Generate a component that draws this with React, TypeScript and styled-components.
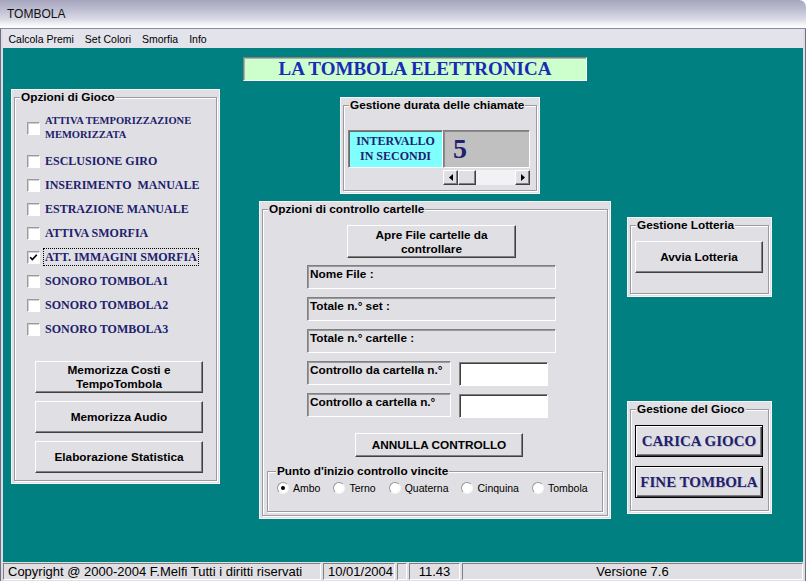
import React from 'react';
import styled, { createGlobalStyle, css } from 'styled-components';

const SANS = `"Liberation Sans", Arial, sans-serif`;
const SERIF = `"Liberation Serif", "Times New Roman", serif`;
const FACE = '#e0dfe3';
const NAVY = '#20206e';

const GlobalStyle = createGlobalStyle`
    html, body {
        margin: 0;
        padding: 0;
        background: #ffffff;
    }
    body {
        font-family: ${SANS};
    }
    * {
        box-sizing: border-box;
    }
`;

const raised = css`
    border: 1px solid;
    border-color: #ffffff #404040 #404040 #ffffff;
    box-shadow: inset -1px -1px 0 #808080;
`;

const sunken = css`
    border: 1px solid;
    border-color: #808080 #ffffff #ffffff #808080;
    box-shadow: inset 1px 1px 0 #9a9a9a;
`;

const Window = styled.div`
    width: 806px;
    height: 581px;
    display: flex;
    flex-direction: column;
    overflow: hidden;
`;

const TitleBar = styled.div`
    flex: none;
    height: 29px;
    display: flex;
    align-items: center;
    padding-left: 7px;
    background: linear-gradient(#a6a5be 0%, #bebed1 35%, #d9d9e6 68%, #f7f7fa 90%, #ffffff 100%);
    border-bottom: 1px solid #8a8a9a;
    border-top-right-radius: 7px;
    font: 12px ${SANS};
    color: #111;
`;

const Body = styled.div`
    flex: 1;
    display: flex;
    flex-direction: column;
    border-left: 1px solid #6e6e80;
    border-right: 1px solid #6e6e80;
    padding: 0 2px;
    background: #dcdce6;
`;

const MenuBar = styled.div`
    flex: none;
    height: 19px;
    display: flex;
    align-items: center;
    background: #e3e3eb;
    font: 10.5px ${SANS};
    color: #000;
`;

const MenuItem = styled.span`
    padding: 0 5.5px;
`;

const Main = styled.div`
    flex: none;
    height: 514px;
    background: #008080;
    display: flex;
    align-items: flex-start;
    padding: 9px 0 0 8px;
`;

const LeftCol = styled.div`
    margin-top: 32px;
    width: 209px;
`;

const CenterCol = styled.div`
    margin-left: 39px;
    width: 352px;
    display: flex;
    flex-direction: column;
`;

const RightCol = styled.div`
    margin-left: 16px;
    margin-top: 160px;
    display: flex;
    flex-direction: column;
`;

const Banner = styled.div`
    margin-left: -16px;
    width: 344px;
    height: 24px;
    background: #ccffcc;
    ${sunken};
    box-shadow: inset 1px 1px 0 #b0b0b0;
    display: flex;
    align-items: center;
    justify-content: center;
    font: bold 19px/22px ${SERIF};
    color: #1b2ab6;
`;

const Frame = styled.div<{ $w: number; $h: number; $top?: number; $left?: number }>`
    width: ${p => p.$w}px;
    height: ${p => p.$h}px;
    margin-top: ${p => p.$top ?? 0}px;
    margin-left: ${p => p.$left ?? 0}px;
    background: ${FACE};
    border: 1px solid #f6f6f9;
    padding: 0 2px 2px;
    display: flex;
    flex: none;
`;

const SubFrame = styled.div<{ $w: number; $h: number; $top: number; $left: number }>`
    flex: none;
    display: flex;
    width: ${p => p.$w}px;
    height: ${p => p.$h}px;
    margin: ${p => p.$top}px 0 0 ${p => p.$left}px;
`;

const Group = styled.fieldset`
    flex: 1;
    margin: 0;
    padding: 0;
    min-width: 0;
    border: 1px solid #9a9aa2;
    box-shadow: 1px 1px 0 #ffffff, inset 1px 1px 0 #ffffff;
    display: flex;
    flex-direction: column;
    align-items: flex-start;
`;

const Legend = styled.legend<{ $indent?: number }>`
    margin-left: ${p => p.$indent ?? 5}px;
    padding: 0 1px;
    background: ${FACE};
    font: bold 11.8px/14px ${SANS};
    color: #000;
`;

const CheckList = styled.div`
    padding: 9px 0 0 12px;
    display: flex;
    flex-direction: column;
`;

const CheckRow = styled.div<{ $tall?: boolean }>`
    display: flex;
    align-items: center;
    gap: 3px;
    height: ${p => (p.$tall ? 30 : 24)}px;
    margin-bottom: ${p => (p.$tall ? 6 : 0)}px;
`;

const Box = styled.span`
    flex: none;
    width: 13px;
    height: 13px;
    background: #ffffff;
    border: 1px solid;
    border-color: #9c9c9c #ffffff #ffffff #9c9c9c;
    box-shadow: inset 1px 1px 0 #d0d0d0;
    display: flex;
    align-items: center;
    justify-content: center;
`;

const CheckLabel = styled.span<{ $small?: boolean; $focus?: boolean }>`
    font: bold ${p => (p.$small ? 10.5 : 12)}px/14px ${SERIF};
    color: ${NAVY};
    padding: 1px 1px 1px 1px;
    border: 1px dotted ${p => (p.$focus ? '#000' : 'transparent')};
    white-space: nowrap;
`;

const ButtonStack = styled.div<{ $top: number; $left: number; $gap: number }>`
    display: flex;
    flex-direction: column;
    gap: ${p => p.$gap}px;
    margin-top: ${p => p.$top}px;
    margin-left: ${p => p.$left}px;
`;

const Button = styled.button<{ $w: number; $h: number; $top?: number; $left?: number }>`
    flex: none;
    width: ${p => p.$w}px;
    height: ${p => p.$h}px;
    margin: ${p => p.$top ?? 0}px 0 0 ${p => p.$left ?? 0}px;
    padding: 0;
    background: ${FACE};
    ${raised};
    font: bold 11.8px/14px ${SANS};
    color: #000;
    text-align: center;
    cursor: default;
`;

const BigButton = styled(Button)`
    border: 1px solid #000;
    box-shadow: inset 1px 1px 0 #ffffff, inset -1px -1px 0 #404040, inset -2px -2px 0 #808080;
    font: bold 15px/18px ${SERIF};
    color: ${NAVY};
    text-shadow: 1px 1px 0 rgba(32, 32, 110, 0.18);
`;

const Interval = styled.div`
    display: grid;
    grid-template-columns: 95px 87px;
    grid-template-rows: 38px 15px;
    row-gap: 2px;
    margin: 18px 0 0 4px;
`;

const IntervalCaption = styled.div`
    background: #80ffff;
    ${sunken};
    box-shadow: inset 1px 1px 0 #6a6a6a;
    display: flex;
    align-items: center;
    justify-content: center;
    text-align: center;
    font: bold 12px/15px ${SERIF};
    color: ${NAVY};
`;

const IntervalValue = styled.div`
    background: #c0c0c0;
    ${sunken};
    box-shadow: inset 1px 1px 0 #8a8a8a;
    display: flex;
    align-items: center;
    padding-left: 9px;
    font: bold 28px/30px ${SERIF};
    color: ${NAVY};
`;

const ScrollBar = styled.div`
    grid-column: 2;
    display: flex;
    background: #f2f2f4;
`;

const ScrollButton = styled.div<{ $w: number }>`
    flex: none;
    width: ${p => p.$w}px;
    height: 15px;
    background: ${FACE};
    ${raised};
    display: flex;
    align-items: center;
    justify-content: center;
`;

const Track = styled.div`
    flex: 1;
`;

const InfoBox = styled.div<{ $w: number; $top?: number; $left?: number }>`
    flex: none;
    width: ${p => p.$w}px;
    height: 24px;
    margin: ${p => p.$top ?? 0}px 0 0 ${p => p.$left ?? 0}px;
    ${sunken};
    padding: 1px 2px;
    font: bold 11.8px/14px ${SANS};
    color: #000;
    white-space: nowrap;
`;

const FieldRow = styled.div`
    display: flex;
    align-items: flex-start;
    gap: 8px;
    height: 24px;
    margin: 8px 0 0 44px;
`;

const Input = styled.div`
    width: 89px;
    height: 24px;
    margin-top: 1px;
    background: #ffffff;
    ${sunken};
    box-shadow: inset 1px 1px 0 #404040;
`;

const RadioRow = styled.div`
    display: flex;
    align-items: center;
    gap: 13px;
    height: 16px;
    margin: 2px 0 0 9px;
`;

const RadioItem = styled.label`
    display: flex;
    align-items: center;
    gap: 4px;
    font: 10.5px/14px ${SANS};
    color: #000;
`;

const Radio = styled.span<{ $on?: boolean }>`
    flex: none;
    width: 12px;
    height: 12px;
    border-radius: 50%;
    background: #ffffff;
    border: 1px solid;
    border-color: #9a9a9a #f4f4f4 #f4f4f4 #9a9a9a;
    display: flex;
    align-items: center;
    justify-content: center;
    &::after {
        content: '';
        width: 4px;
        height: 4px;
        border-radius: 50%;
        background: ${p => (p.$on ? '#000' : 'transparent')};
    }
`;

const StatusBar = styled.div`
    flex: none;
    height: 19px;
    display: flex;
    gap: 2px;
    padding: 1px 0;
    background: ${FACE};
`;

const StatusCell = styled.div<{ $w?: number; $center?: boolean }>`
    ${p => (p.$w ? `flex: none; width: ${p.$w}px;` : 'flex: 1;')}
    height: 17px;
    border: 1px solid;
    border-color: #808080 #ffffff #ffffff #808080;
    padding: 0 4px;
    font: 13px/15px ${SANS};
    color: #000;
    text-align: ${p => (p.$center ? 'center' : 'left')};
    white-space: nowrap;
    overflow: hidden;
`;

const Check = () => (
    <svg width="9" height="9" viewBox="0 0 9 9">
        <polyline points="1.2,4.2 3.4,6.6 7.8,1.8" fill="none" stroke="#000" strokeWidth="1.7" />
    </svg>
);

const Arrow = ({ dir }: { dir: 'left' | 'right' }) => (
    <svg width="4" height="7" viewBox="0 0 4 7">
        <polygon points={dir === 'left' ? '4,0 0,3.5 4,7' : '0,0 4,3.5 0,7'} fill="#000" />
    </svg>
);

const options = [
    'ESCLUSIONE GIRO',
    'INSERIMENTO\u00a0 MANUALE',
    'ESTRAZIONE MANUALE',
    'ATTIVA SMORFIA',
    'ATT. IMMAGINI SMORFIA',
    'SONORO TOMBOLA1',
    'SONORO TOMBOLA2',
    'SONORO TOMBOLA3',
];

const prizes = ['Ambo', 'Terno', 'Quaterna', 'Cinquina', 'Tombola'];

export default function App() {
    return (
        <Window>
            <GlobalStyle />
            <TitleBar>TOMBOLA</TitleBar>
            <Body>
                <MenuBar>
                    <MenuItem>Calcola Premi</MenuItem>
                    <MenuItem>Set Colori</MenuItem>
                    <MenuItem>Smorfia</MenuItem>
                    <MenuItem>Info</MenuItem>
                </MenuBar>
                <Main>
                    <LeftCol>
                        <Frame $w={209} $h={395}>
                            <Group>
                                <Legend>Opzioni di Gioco</Legend>
                                <CheckList>
                                    <CheckRow $tall>
                                        <Box />
                                        <CheckLabel $small>
                                            ATTIVA TEMPORIZZAZIONE
                                            <br />
                                            MEMORIZZATA
                                        </CheckLabel>
                                    </CheckRow>
                                    {options.map(o => {
                                        const on = o === 'ATT. IMMAGINI SMORFIA';
                                        return (
                                            <CheckRow key={o}>
                                                <Box>{on && <Check />}</Box>
                                                <CheckLabel $focus={on}>{o}</CheckLabel>
                                            </CheckRow>
                                        );
                                    })}
                                </CheckList>
                                <ButtonStack $top={20} $left={20} $gap={8}>
                                    <Button $w={168} $h={32}>
                                        Memorizza Costi e
                                        <br />
                                        TempoTombola
                                    </Button>
                                    <Button $w={168} $h={32}>
                                        Memorizza Audio
                                    </Button>
                                    <Button $w={168} $h={32}>
                                        Elaborazione Statistica
                                    </Button>
                                </ButtonStack>
                            </Group>
                        </Frame>
                    </LeftCol>

                    <CenterCol>
                        <Banner>LA TOMBOLA ELETTRONICA</Banner>
                        <Frame $w={200} $h={97} $top={16} $left={81}>
                            <Group>
                                <Legend>Gestione durata delle chiamate</Legend>
                                <Interval>
                                    <IntervalCaption>
                                        INTERVALLO
                                        <br />
                                        IN SECONDI
                                    </IntervalCaption>
                                    <IntervalValue>5</IntervalValue>
                                    <ScrollBar>
                                        <ScrollButton $w={15}>
                                            <Arrow dir="left" />
                                        </ScrollButton>
                                        <ScrollButton $w={18} />
                                        <Track />
                                        <ScrollButton $w={15}>
                                            <Arrow dir="right" />
                                        </ScrollButton>
                                    </ScrollBar>
                                </Interval>
                            </Group>
                        </Frame>
                        <Frame $w={352} $h={318} $top={7}>
                            <Group>
                                <Legend>Opzioni di controllo cartelle</Legend>
                                <Button $w={169} $h={33} $top={9} $left={84}>
                                    Apre File cartelle da
                                    <br />
                                    controllare
                                </Button>
                                <InfoBox $w={249} $top={7} $left={44}>
                                    Nome File :
                                </InfoBox>
                                <InfoBox $w={249} $top={8} $left={44}>
                                    Totale n.° set :
                                </InfoBox>
                                <InfoBox $w={249} $top={8} $left={44}>
                                    Totale n.° cartelle :
                                </InfoBox>
                                <FieldRow>
                                    <InfoBox $w={144}>Controllo da cartella n.°</InfoBox>
                                    <Input />
                                </FieldRow>
                                <FieldRow>
                                    <InfoBox $w={144}>Controllo a cartella n.°</InfoBox>
                                    <Input />
                                </FieldRow>
                                <Button $w={168} $h={24} $top={16} $left={92}>
                                    ANNULLA CONTROLLO
                                </Button>
                                <SubFrame $w={336} $h={48} $top={7} $left={4}>
                                    <Group>
                                        <Legend $indent={8}>Punto d'inizio controllo vincite</Legend>
                                        <RadioRow>
                                            {prizes.map((p, i) => (
                                                <RadioItem key={p}>
                                                    <Radio $on={i === 0} />
                                                    {p}
                                                </RadioItem>
                                            ))}
                                        </RadioRow>
                                    </Group>
                                </SubFrame>
                            </Group>
                        </Frame>
                    </CenterCol>

                    <RightCol>
                        <Frame $w={145} $h={80}>
                            <Group>
                                <Legend>Gestione Lotteria</Legend>
                                <Button $w={128} $h={32} $top={9} $left={4}>
                                    Avvia Lotteria
                                </Button>
                            </Group>
                        </Frame>
                        <Frame $w={145} $h={113} $top={104}>
                            <Group>
                                <Legend>Gestione del Gioco</Legend>
                                <ButtonStack $top={9} $left={4} $gap={9}>
                                    <BigButton $w={128} $h={32}>
                                        CARICA GIOCO
                                    </BigButton>
                                    <BigButton $w={128} $h={32}>
                                        FINE TOMBOLA
                                    </BigButton>
                                </ButtonStack>
                            </Group>
                        </Frame>
                    </RightCol>
                </Main>
                <StatusBar>
                    <StatusCell $w={318}>Copyright @ 2000-2004 F.Melfi Tutti i diritti riservati</StatusCell>
                    <StatusCell $w={72} $center>
                        10/01/2004
                    </StatusCell>
                    <StatusCell $w={6} />
                    <StatusCell $w={51} $center>
                        11.43
                    </StatusCell>
                    <StatusCell $center>Versione 7.6</StatusCell>
                </StatusBar>
            </Body>
        </Window>
    );
}
